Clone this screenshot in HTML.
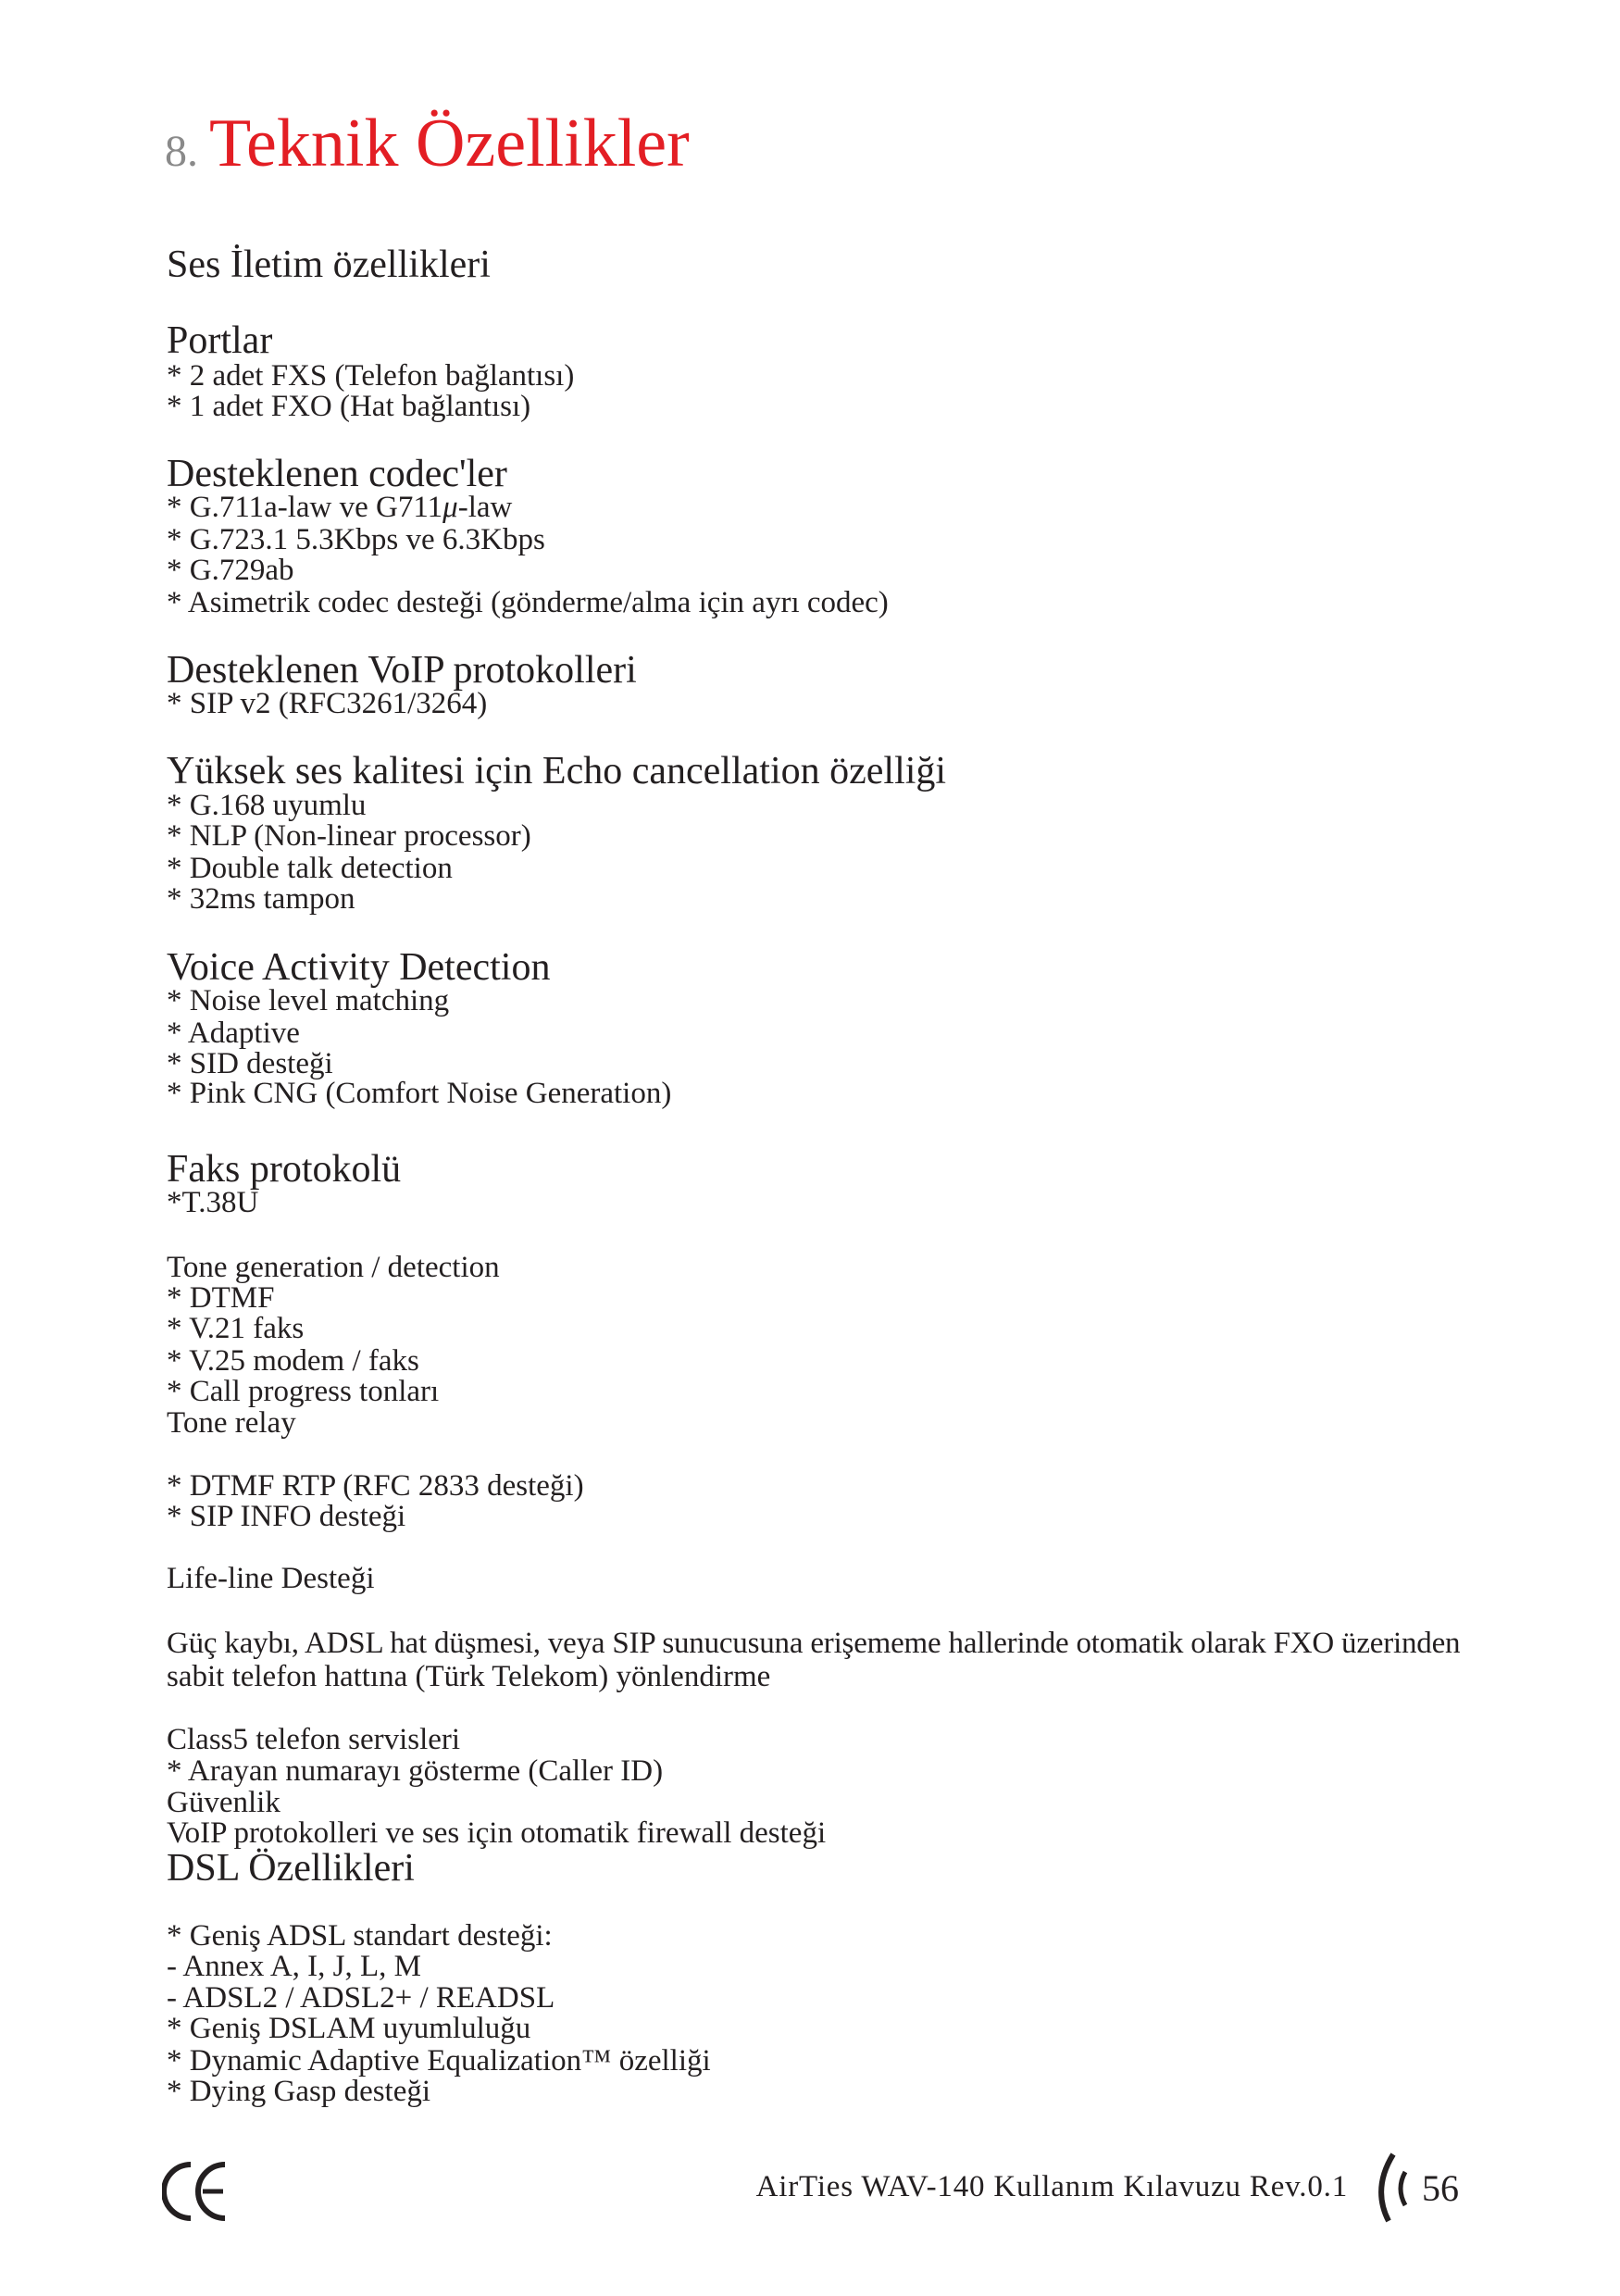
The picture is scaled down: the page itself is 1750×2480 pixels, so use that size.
<!DOCTYPE html>
<html><head><meta charset="utf-8"><style>
html,body{margin:0;padding:0;background:#fff}
body{width:1750px;height:2480px;position:relative;overflow:hidden;font-family:"Liberation Serif","DejaVu Serif",serif;color:#231f20}
div.l{position:absolute;left:180px;white-space:nowrap;line-height:1;font-size:33px}
div.h{position:absolute;left:180px;white-space:nowrap;line-height:1;font-size:42px}
</style></head><body>
<div style="position:absolute;left:178px;top:140px;font-size:48px;line-height:1;color:#8a8a8a">8.</div>
<div style="position:absolute;left:226px;top:118px;font-size:74px;line-height:1;color:#e31e24;white-space:nowrap">Teknik Özellikler</div>

<div class="h" style="top:265px">Ses İletim özellikleri</div>
<div class="h" style="top:347px">Portlar</div>
<div class="l" style="top:390px">* 2 adet FXS (Telefon bağlantısı)</div>
<div class="l" style="top:423px">* 1 adet FXO (Hat bağlantısı)</div>
<div class="h" style="top:491px">Desteklenen codec'ler</div>
<div class="l" style="top:532px">* G.711a-law ve G711<i>μ</i>-law</div>
<div class="l" style="top:567px">* G.723.1 5.3Kbps ve 6.3Kbps</div>
<div class="l" style="top:600px">* G.729ab</div>
<div class="l" style="top:635px">* Asimetrik codec desteği (gönderme/alma için ayrı codec)</div>
<div class="h" style="top:703px">Desteklenen VoIP protokolleri</div>
<div class="l" style="top:744px">* SIP v2 (RFC3261/3264)</div>
<div class="h" style="top:812px">Yüksek ses kalitesi için Echo cancellation özelliği</div>
<div class="l" style="top:854px">* G.168 uyumlu</div>
<div class="l" style="top:887px">* NLP (Non-linear processor)</div>
<div class="l" style="top:922px">* Double talk detection</div>
<div class="l" style="top:955px">* 32ms tampon</div>
<div class="h" style="top:1024px">Voice Activity Detection</div>
<div class="l" style="top:1065px">* Noise level matching</div>
<div class="l" style="top:1100px">* Adaptive</div>
<div class="l" style="top:1133px">* SID desteği</div>
<div class="l" style="top:1165px">* Pink CNG (Comfort Noise Generation)</div>
<div class="h" style="top:1242px">Faks protokolü</div>
<div class="l" style="top:1283px">*T.38U</div>
<div class="l" style="top:1353px">Tone generation / detection</div>
<div class="l" style="top:1386px">* DTMF</div>
<div class="l" style="top:1419px">* V.21 faks</div>
<div class="l" style="top:1454px">* V.25 modem / faks</div>
<div class="l" style="top:1487px">* Call progress tonları</div>
<div class="l" style="top:1521px">Tone relay</div>
<div class="l" style="top:1589px">* DTMF RTP (RFC 2833 desteği)</div>
<div class="l" style="top:1622px">* SIP INFO desteği</div>
<div class="l" style="top:1689px">Life-line Desteği</div>
<div class="l" style="top:1759px;letter-spacing:-0.2px">Güç kaybı, ADSL hat düşmesi, veya SIP sunucusuna erişememe hallerinde otomatik olarak FXO üzerinden</div>
<div class="l" style="top:1795px">sabit telefon hattına (Türk Telekom) yönlendirme</div>
<div class="l" style="top:1863px">Class5 telefon servisleri</div>
<div class="l" style="top:1897px">* Arayan numarayı gösterme (Caller ID)</div>
<div class="l" style="top:1931px">Güvenlik</div>
<div class="l" style="top:1964px">VoIP protokolleri ve ses için otomatik firewall desteği</div>
<div class="h" style="top:1997px">DSL Özellikleri</div>
<div class="l" style="top:2075px">* Geniş ADSL standart desteği:</div>
<div class="l" style="top:2108px">- Annex A, I, J, L, M</div>
<div class="l" style="top:2142px">- ADSL2 / ADSL2+ / READSL</div>
<div class="l" style="top:2175px">* Geniş DSLAM uyumluluğu</div>
<div class="l" style="top:2210px">* Dynamic Adaptive Equalization™ özelliği</div>
<div class="l" style="top:2243px">* Dying Gasp desteği</div>

<svg style="position:absolute;left:175px;top:2334px" width="80" height="66" viewBox="0 0 80 66">
<path d="M31 4 A29 29 0 0 0 31 62" fill="none" stroke="#231f20" stroke-width="6"/>
<path d="M68 4 A29 29 0 0 0 68 62" fill="none" stroke="#231f20" stroke-width="6"/>
<line x1="44" y1="33" x2="66" y2="33" stroke="#231f20" stroke-width="5"/>
</svg>

<div style="position:absolute;right:294px;top:2346px;font-size:33px;line-height:1;white-space:nowrap;letter-spacing:0.8px">AirTies WAV-140 Kullanım Kılavuzu Rev.0.1</div>
<svg style="position:absolute;left:1480px;top:2322px" width="50" height="84" viewBox="0 0 50 84">
<path d="M25 5 Q2 42 20 77" fill="none" stroke="#231f20" stroke-width="6"/>
<path d="M38 24 Q28 42 38 60" fill="none" stroke="#231f20" stroke-width="5"/>
</svg>
<div style="position:absolute;left:1536px;top:2344px;font-size:40px;line-height:1">56</div>
</body></html>
